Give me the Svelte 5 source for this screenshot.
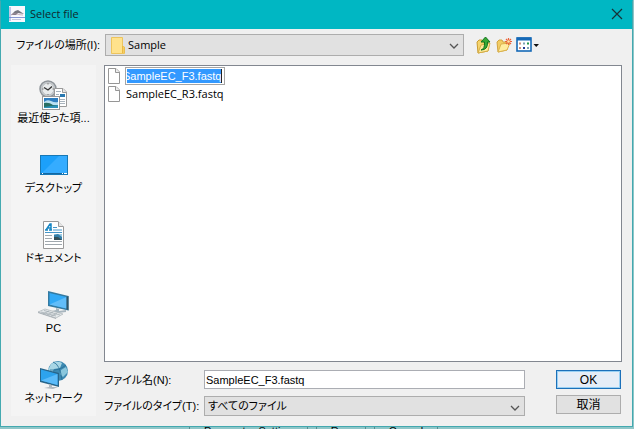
<script>
  const places = [
    { id: 'recent', label: '最近使った項...' },
    { id: 'desktop', label: 'デスクトップ' },
    { id: 'documents', label: 'ドキュメント' },
    { id: 'pc', label: 'PC' },
    { id: 'network', label: 'ネットワーク' }
  ];
  let filename = $state('SampleEC_F3.fastq');
  let rename = $state('SampleEC_F3.fastq');
</script>

{#snippet page()}
  <svg width="14" height="17" viewBox="0 0 14 17" aria-hidden="true">
    <path d="M1.5 .5H9L12.5 4V15.500H1.500Z" fill="#fff" stroke="#969696" />
    <path d="M8.500 .5V4.500H12.500" fill="#eee" stroke="#969696" />
  </svg>
{/snippet}

{#snippet chevron()}
  <svg class="chevron" width="10" height="6" viewBox="0 0 10 6" aria-hidden="true">
    <path d="M1 1L5 5L9 1" fill="none" stroke="#555" stroke-width="1.3" />
  </svg>
{/snippet}

{#snippet placeIcon(id)}
  <svg width="32" height="32" viewBox="0 0 32 32" aria-hidden="true">
    {#if id === 'recent'}
      <circle cx="10" cy="10" r="8" fill="#c9cdd0" stroke="#8e9499" stroke-width="1.5" />
      <circle cx="10" cy="10" r="6" fill="#e8ebec" stroke="#a9adb0" stroke-width=".6" />
      <path d="M10 4V5.500M10 15V16M4 10H5.500M14.500 10H16" stroke="#777" />
      <path d="M6 8.500L10 11L14 7.500" fill="none" stroke="#333" stroke-width="1.4" />
      <path d="M16.500 9.500H25L28.500 13V27.500H16.500Z" fill="#fff" stroke="#9a9a9a" />
      <path d="M24.500 9.500V13.500H28.500" fill="#e4e4e4" stroke="#9a9a9a" />
      <path d="M18 12.500H23M18 15.500H21M22 20.500H27M22 22.500H27M22 24.500H27" stroke="#a8b3bd" />
      <rect x="22" y="15" width="5" height="3" fill="#2878b0" />
      <rect x="4.500" y="17.500" width="17" height="13" fill="#fff" stroke="#999" />
      <rect x="6" y="19" width="14" height="10" fill="#2e7ec0" />
      <path d="M6 23Q9 20 13 22T20 23V26H6Z" fill="#b9e0f2" />
      <path d="M6 24Q11 23 15 26L20 26V29H6Z" fill="#286f64" />
      <path d="M6 28L20 26V29H6Z" fill="#2c91b8" />
    {:else if id === 'desktop'}
      <rect x="2.500" y="6.500" width="27" height="19" fill="#1ca0fa" stroke="#1778b5" />
      <path d="M4 24L21 7H29V24Z" fill="#35acff" />
      <path d="M3 24H29V25H3Z" fill="#1367a1" />
      <path d="M4 24.500H5M24 24.500H25M26 24.500H29" stroke="#fff" />
    {:else if id === 'documents'}
      <path d="M5.500 2.500H20L25.500 8V29.500H5.500Z" fill="#fff" stroke="#999" />
      <path d="M20.500 2.500V7.500H25.500" fill="#e5e5e5" stroke="#999" />
      <path d="M8 11L12 5H13L13 11M10 9H13M7 11H10M11 11H14" fill="none" stroke="#1686c4" stroke-width="1.5" />
      <path d="M15 8.500H19M15 11H24M7 13.500H24" stroke="#4696c7" />
      <path d="M7 16.500H14M7 19.500H14M7 22.500H24M7 25.500H24" stroke="#a0a8ae" />
      <rect x="16" y="15" width="8" height="6" fill="#357fa8" />
      <path d="M16 16L20 15L24 18V15H16Z" fill="#9bcbe4" />
      <path d="M16 18L20 18L24 21H16Z" fill="#344f58" />
    {:else if id === 'pc'}
      <path d="M10 2L30.500 7V21.500L10 17Z" fill="#347aa1" />
      <path d="M11.500 4L28.500 8V19.500L11.500 15.500Z" fill="#31a9f6" />
      <path d="M11.500 15.500L28.500 8V19.500Z" fill="#62bdf9" />
      <path d="M28.500 8L30.500 7V21.500L28.500 20Z" fill="#315466" />
      <path d="M18 19L21 20V22L28 21L28 23L20 24L14 22L18 21Z" fill="#a7b5be" />
      <path d="M0 23L7 20L25 25L18 29Z" fill="#e4e8ea" stroke="#abb3b8" stroke-width=".7" />
      <path d="M3 23L18 27M6 21.500L22 26M5 25L11 22M9 26L15 23M13 27L19 24.500" stroke="#9da7ae" stroke-width=".7" />
      <path d="M0 23L18 29V30L0 24Z" fill="#abb2b7" />
    {:else}
      <circle cx="20" cy="12" r="10" fill="#3d89b1" />
      <path d="M13 5Q19 1 24 4L22 9L16 10L14 14L10 11Z" fill="#a8d6e5" />
      <path d="M23 11L28 8L30 13L25 18L22 15Z" fill="#8ac7dd" />
      <path d="M15 3Q22 5 24 21M28 6Q21 12 12 11" fill="none" stroke="#256d96" stroke-width=".8" />
      <path d="M2 9L21 14V28L2 23Z" fill="#28658a" />
      <path d="M3 10.500L19.500 15V26L3 21.500Z" fill="#2da3ed" />
      <path d="M3 21.500L19.500 15V26Z" fill="#5bbbf9" />
      <path d="M11 25L14 26V28L20 28L15 30L6 29L11 28Z" fill="#b1bac0" />
    {/if}
  </svg>
{/snippet}

<div class="screen">
  <main class="dialog">
    <header>
      <svg width="16" height="16" viewBox="0 0 16 16" aria-hidden="true">
        <rect width="16" height="16" fill="#f8f8fd" />
        <path d="M2 9L6 5L9 4L15 8L9 7L7 9Z" fill="#777781" />
        <path d="M1 1V15M0 11.500H16" stroke="#6a7dc8" stroke-width=".8" />
        <path d="M2 9Q5 7 8 8T14 9" fill="none" stroke="#b898a8" stroke-width=".7" />
        <path d="M3 13.500H12" stroke="#c5c6db" />
      </svg>
      <h1>Select file</h1>
      <button aria-label="Close">
        <svg width="12" height="12" viewBox="0 0 12 12" aria-hidden="true">
          <path d="M1 1L11 11M11 1L1 11" stroke="#173237" stroke-width="1.2" />
        </svg>
      </button>
    </header>

    <div class="location">
      <label for="location">ファイルの場所(I):</label>
      <div class="combo folder-combo">
        <svg class="folder" width="14" height="17" viewBox="0 0 14 17" aria-hidden="true">
          <path d="M.5 .5H11.500V9L13.500 10V16.500H.5Z" fill="#ffe28c" stroke="#edc45d" />
          <path d="M11.500 9V16M13 10V16" stroke="#eab941" />
        </svg>
        <select id="location"><option>Sample</option></select>
        {@render chevron()}
      </div>
      <div class="tools">
        <button aria-label="Up one level">
          <svg width="16" height="18" viewBox="0 0 16 18" aria-hidden="true">
            <path d="M1 6L3 4H6L7 6H12V15L2 17Z" fill="#f5d46d" stroke="#c99b30" />
            <path d="M2 17L5 9L14 7L12 15Z" fill="#ffe99a" stroke="#d5ae47" />
            <path d="M5 14Q9 13 8.500 6H5L9.500 1L14 6H11.500Q12 14 5 14Z" fill="#37a936" stroke="#14761d" />
          </svg>
        </button>
        <button aria-label="New folder">
          <svg width="16" height="16" viewBox="0 0 16 16" aria-hidden="true">
            <path d="M1 5L3 3H6L7 5H12L11 13L2 15Z" fill="#f2cd65" stroke="#d2a441" />
            <path d="M2 15L5 7L14 6L11 13Z" fill="#ffed9f" stroke="#dbb34e" />
            <path d="M12.500 1V8M9 4.500H16M10 2L15 7M15 2L10 7" stroke="#eb633b" stroke-width="1.2" />
            <circle cx="12.500" cy="4.500" r="1.300" fill="#ffe5a2" />
          </svg>
        </button>
        <button aria-label="View menu">
          <svg width="24" height="16" viewBox="0 0 24 16" aria-hidden="true">
            <rect x="1" y="1" width="14" height="13" fill="#fff" stroke="#1569b7" stroke-width="1.600" />
            <path d="M1 2H15" stroke="#1569b7" stroke-width="3" />
            <path d="M3 6.500H5M3 11H5" stroke="#c99181" stroke-width="2" />
            <path d="M7 6.500H9M11 11H13" stroke="#7da2b4" stroke-width="2" />
            <path d="M11 6.500H13" stroke="#24974a" stroke-width="2" />
            <path d="M7 11H9" stroke="#223a91" stroke-width="2" />
            <path d="M17.500 7H23L20.250 10Z" fill="#111" />
          </svg>
        </button>
      </div>
    </div>

    <div class="content">
      <nav>
        {#each places as place}
          <button>{@render placeIcon(place.id)}<span>{place.label}</span></button>
        {/each}
      </nav>

      <div class="browser">
        <ul>
          <li>
            {@render page()}
            <span class="rename"><input aria-label="Rename file" bind:value={rename} /></span>
          </li>
          <li>{@render page()}<span class="file-name">SampleEC_R3.fastq</span></li>
        </ul>

        <form onsubmit={(event) => event.preventDefault()}>
          <div class="fields">
            <label for="filename">ファイル名(N):</label>
            <input id="filename" bind:value={filename} />
            <label for="type">ファイルのタイプ(T):</label>
            <div class="combo type-combo">
              <select id="type"><option>すべてのファイル</option></select>
              {@render chevron()}
            </div>
          </div>
          <div class="actions">
            <button class="ok" type="submit">OK</button>
            <button type="button">取消</button>
          </div>
        </form>
      </div>
    </div>
  </main>
  <div class="behind">
    <button>Parameter Setting</button>
    <button>Run</button>
    <button>Cancel</button>
  </div>
</div>

<style>
  .screen {
    display: flex;
    flex-direction: column;
    height: 100vh;
    padding-right: 1px;
    box-sizing: border-box;
    overflow: hidden;
    background: #8fc6c8;
    color: #000;
    font: 11px/16px "Liberation Sans", "Noto Sans CJK JP", sans-serif;
    font-feature-settings: "palt";
  }
  *, *::before, *::after { box-sizing: border-box; }
  button, input, select {
    margin: 0;
    padding: 0;
    border: 0;
    border-radius: 0;
    color: inherit;
    font: inherit;
    font-feature-settings: inherit;
  }
  button { background: none; }
  svg { display: block; flex: none; }
  .dialog {
    flex: 1;
    min-height: 0;
    display: flex;
    flex-direction: column;
    border: 1px solid #43a9b0;
    border-top-color: #00b7c3;
    background: #f0f0f0;
  }
  header {
    display: flex;
    align-items: center;
    gap: 5px;
    height: 28px;
    padding: 0 9px 2px 8px;
    background: #00b7c3;
  }
  h1 {
    flex: 1;
    margin: 0;
    font: 11px/16px "Open Sans", sans-serif;
    color: #10282b;
  }
  .location {
    display: flex;
    align-items: center;
    height: 32px;
    padding: 0 10px 0 15px;
  }
  .location label { width: 89px; white-space: nowrap; }
  .combo {
    position: relative;
    flex: 1;
    height: 22px;
    border: 1px solid #adadad;
    background: #e1e1e1;
  }
  .combo select {
    display: block;
    width: 100%;
    height: 100%;
    padding-left: 3px;
    appearance: none;
    background: transparent;
  }
  .combo .chevron {
    position: absolute;
    right: 4px;
    top: 8px;
    pointer-events: none;
  }
  .folder {
    position: absolute;
    left: 5px;
    top: 2px;
    pointer-events: none;
  }
  .folder-combo select {
    padding-left: 22px;
    font-family: "Open Sans", sans-serif;
  }
  .tools {
    display: flex;
    align-items: center;
    gap: 4px;
    width: 158px;
    padding-left: 12px;
  }
  .content {
    flex: 1;
    min-height: 0;
    display: flex;
    gap: 8px;
    padding: 4px 10px 10px 10px;
  }
  nav {
    display: flex;
    flex-direction: column;
    width: 85px;
    background: #f4f4f4;
  }
  nav button {
    display: flex;
    flex-direction: column;
    align-items: center;
    height: 70px;
    padding-top: 14px;
    white-space: nowrap;
  }
  nav span { margin-top: -1px; }
  .browser {
    flex: 1;
    min-width: 0;
    display: flex;
    flex-direction: column;
  }
  ul {
    flex: 1;
    margin: 0;
    padding: 1px 2px;
    border: 1px solid #828790;
    background: #fff;
    list-style: none;
  }
  li {
    display: flex;
    align-items: center;
    gap: 4px;
    height: 18px;
  }
  .rename {
    width: 100px;
    height: 18px;
    padding: 1px 2px 1px 1px;
    border: 1px solid #a5a5a5;
    background: #fff;
  }
  .rename input {
    display: block;
    width: 100%;
    height: 14px;
    border-right: 1px solid #222;
    background: #3399ff;
    color: #fff;
    line-height: 14px;
    text-indent: -4px;
  }
  .file-name { padding-left: 1px; font-family: "Open Sans", sans-serif; }
  form {
    display: flex;
    gap: 31px;
    padding: 8px 1px 0 0;
  }
  .fields {
    flex: 1;
    display: grid;
    grid-template-columns: 100px 1fr;
    row-gap: 7px;
    align-items: center;
    white-space: nowrap;
  }
  .fields > input {
    height: 19px;
    min-width: 0;
    padding: 0 1px;
    border: 1px solid #abadb3;
    background: #fff;
  }
  .type-combo { height: 20px; }
  .actions {
    width: 65px;
    display: flex;
    flex-direction: column;
    gap: 6px;
  }
  .actions button {
    height: 19px;
    border: 1px solid #adadad;
    background: #e1e1e1;
    font-size: 12px;
    line-height: 16px;
  }
  .actions .ok {
    border-color: #1c70b9;
    background: #e5edf7;
    box-shadow: inset 0 0 0 1px #98d0f4;
  }
  .behind {
    display: flex;
    gap: 8px;
    height: 2px;
    padding-left: 189px;
    overflow: hidden;
  }
  .behind button {
    flex: none;
    display: block;
    height: 8px;
    padding: 0 14px;
    border: solid #578d8f;
    border-width: 0 1px;
    line-height: 8px;
  }
</style>
